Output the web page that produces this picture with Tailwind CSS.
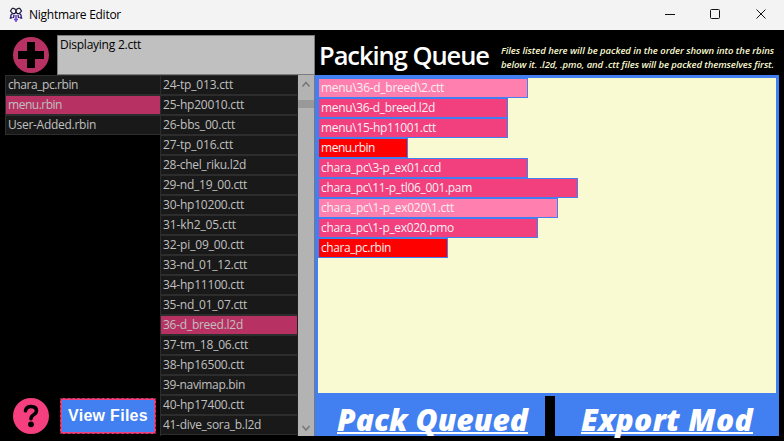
<!DOCTYPE html>
<html lang="en">
<head>
<meta charset="utf-8">
<title>Nightmare Editor</title>
<script src="https://cdn.jsdelivr.net/npm/@tailwindcss/browser@4"></script>
</head>
<body class="w-[784px] h-[441px] overflow-hidden bg-black flex flex-col font-['Open_Sans','Noto_Sans',sans-serif] text-[12px]">
<header class="h-[30px] shrink-0 bg-[#f3f3f3] text-black flex items-center">
  <svg class="ml-[9px] w-[14px] h-[16px] shrink-0" viewBox="0 0 14 16" fill="none">
    <path d="M3.500 1 1.500 4l2 2.500h2.500l1-2.500 1 2.500h2.500l2-2.500-2-3M3.500 1l2.500 1 1 2 1-2 2.500-1" stroke="#15152f" stroke-width="1.200"/>
    <path d="M4 6 2 8l-.500 3 2-.500M10 6l2 2 .500 3-2-.500M5 7.500 4.500 11M9 7.500l.500 3.500" stroke="#35237a" stroke-width="1.400"/>
    <path d="M7 8v7M5 12.500h4" stroke="#6a3fd0" stroke-width="1.500"/>
  </svg>
  <span class="fit ml-[6px] whitespace-pre" data-width="92">Nightmare Editor</span>
  <svg class="ml-auto w-[120px] h-[30px]" viewBox="0 0 120 30" fill="none" stroke="#111">
    <path d="M1 14.500h10"/><rect x="46.500" y="9.500" width="9" height="9" rx="1"/><path d="m92.500 9.500 9 9m0-9-9 9"/>
  </svg>
</header>
<main class="flex-1 flex pl-[5px] pr-[5px] pt-[5px] pb-[5px] min-h-0">
  <section class="w-[310px] shrink-0 flex flex-col">
    <div class="h-10 shrink-0 flex">
      <div class="w-[52px] flex pl-[8px] pt-[2px]">
        <svg class="w-[36px] h-[36px]" viewBox="0 0 36 36"><circle cx="18" cy="18" r="18" fill="#b73262"/><path d="M14 5h8v9h9v8h-9v9h-8v-9H5v-8h9z" fill="#000"/></svg>
      </div>
      <div class="flex-1 bg-[#c0c0c0] border border-[#7b7c80] text-black pl-[2px] leading-[18px]"><span class="fit whitespace-pre" data-width="81">Displaying 2.ctt</span></div>
    </div>
    <div class="flex-1 flex min-h-0">
      <div class="w-[155px] flex flex-col">
        <div id="archives" class="border-l border-[#2d2d2d]"></div>
        <div class="mt-auto h-[40px] flex items-start">
          <svg class="ml-[8px] mt-[2px] w-[36px] h-[36px]" viewBox="0 0 36 36"><circle cx="18" cy="18" r="18" fill="#f53f7f"/><path d="M12.500 12.800c.500-3 2.600-4.300 5.500-4.300 3.300 0 5.500 1.600 5.500 4.400 0 3.900-5.500 3.600-5.500 7.800" fill="none" stroke="#000" stroke-width="3.600" stroke-linecap="round"/><circle cx="18" cy="26.300" r="2.900" fill="#000"/></svg>
          <div class="ml-[11px] mt-[2px] w-[96px] h-[36px] bg-[#f53f7f] border border-dashed border-[#7e2545] px-[1px] py-[1px] flex">
            <div class="flex-1 bg-[#427ff0] text-white text-[16px] font-bold font-['Liberation_Sans',sans-serif] flex items-center justify-center"><span class="fit whitespace-pre" data-width="80">View Files</span></div>
          </div>
        </div>
      </div>
      <div id="entries" class="w-[138px] border-x border-[#2d2d2d] border-r-[#202020]"></div>
      <div class="w-[17px] bg-[#b3b3b3] border-r border-[#77777c] flex flex-col items-center">
        <svg class="w-[16px] h-[25px]" viewBox="0 0 16 25" fill="none" stroke="#777" stroke-width="1.500"><path d="m4.500 11.500 3.500-4 3.500 4"/></svg>
        <div class="h-[8px] w-full bg-[#999]"></div>
        <svg class="mt-auto w-[16px] h-[20px]" viewBox="0 0 16 20" fill="none" stroke="#777" stroke-width="1.500"><path d="m4.500 10 3.500 4 3.500-4"/></svg>
      </div>
    </div>
  </section>
  <section class="w-[464px] shrink-0 flex flex-col">
    <div class="h-10 shrink-0 flex text-white">
      <h1 class="w-[186px] shrink-0 pl-[4px] text-[25.500px] leading-[40px] font-semibold"><span class="fit whitespace-pre" data-width="170">Packing Queue</span></h1>
      <div class="text-[9.500px] font-semibold italic leading-[14px] pt-[9px] text-[#fafad2]">
        <div><span class="fit whitespace-pre" data-width="273">Files listed here will be packed in the order shown into the rbins</span></div>
        <div><span class="fit whitespace-pre" data-width="273">below it. .l2d, .pmo, and .ctt files will be packed themselves first.</span></div>
      </div>
    </div>
    <div id="queue" class="h-[321px] shrink-0 bg-[#fafad2] border-[3px] border-[#427ff0] text-[#f5f0f2]"></div>
    <div class="flex-1 min-h-0 flex gap-[10px] text-white text-[30px] font-extrabold italic leading-[48px]">
      <div class="w-[230px] shrink-0 bg-[#427ff0] pl-[22px]"><span class="fit block w-max whitespace-pre h-[38px] border-b-2 border-white" data-width="191">Pack Queued</span></div>
      <div class="w-[224px] shrink-0 bg-[#427ff0] pl-[26px]"><span class="fit block w-max whitespace-pre h-[38px] border-b-2 border-white" data-width="172">Export Mod</span></div>
    </div>
  </section>
</main>
<script>
const archives = [['chara_pc.rbin', 70], ['menu.rbin', 54], ['User-Added.rbin', 88]];
const entries = [['24-tp_013.ctt',70],['25-hp20010.ctt',81],['26-bbs_00.ctt',72],['27-tp_016.ctt',70],['28-chel_riku.l2d',83],['29-nd_19_00.ctt',84],['30-hp10200.ctt',81],['31-kh2_05.ctt',73],['32-pi_09_00.ctt',81],['33-nd_01_12.ctt',84],['34-hp11100.ctt',81],['35-nd_01_07.ctt',84],['36-d_breed.l2d',80],['37-tm_18_06.ctt',85],['38-hp16500.ctt',81],['39-navimap.bin',82],['40-hp17400.ctt',81],['41-dive_sora_b.l2d',98]];
const queue = [['menu\\36-d_breed\\2.ctt',123,210,'bg-[#ff80ae]'],['menu\\36-d_breed.l2d',114,190,'bg-[#f23f7e]'],['menu\\15-hp11001.ctt',115,190,'bg-[#f23f7e]'],['menu.rbin',54,90,'bg-[#ff0000]'],['chara_pc\\3-p_ex01.ccd',120,210,'bg-[#f23f7e]'],['chara_pc\\11-p_tl06_001.pam',151,260,'bg-[#f23f7e]'],['chara_pc\\1-p_ex020\\1.ctt',133,240,'bg-[#ff80ae]'],['chara_pc\\1-p_ex020.pmo',133,220,'bg-[#f23f7e]'],['chara_pc.rbin',70,130,'bg-[#ff0000]']];
const label = (t, w) => `<span class="fit whitespace-pre" data-width="${w}">${t}</span>`;
function fill(id, rows, selected) {
  document.getElementById(id).innerHTML = rows.map(([t, w]) => {
    const on = t === selected;
    return `<div class="h-5 pl-[2px] leading-[18px] border-y border-[#2d2d2d] text-[#c0c0c0] ${on ? 'bg-[#b73262]' : 'bg-[#191919]'}">${label(t, w)}</div>`;
  }).join('');
}
fill('archives', archives, 'menu.rbin');
fill('entries', entries, '36-d_breed.l2d');
document.getElementById('queue').innerHTML = queue.map(([t, w, width, bg]) =>
  `<div class="h-5 border border-[#427ff0] pl-[2px] leading-[18px] ${bg}" style="width:${width}px">${label(t, w)}</div>`).join('');
function fitLabels() {
  document.querySelectorAll('.fit').forEach(el => {
    el.style.letterSpacing = '0px';
    const gap = el.dataset.width - el.getBoundingClientRect().width;
    el.style.letterSpacing = gap / el.textContent.length + 'px';
  });
}
window.addEventListener('load', () => { fitLabels(); document.fonts.ready.then(fitLabels); });
new ResizeObserver(fitLabels).observe(document.body);
</script>
</body>
</html>
